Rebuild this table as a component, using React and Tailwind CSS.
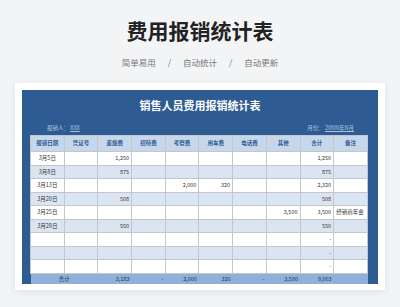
const headers = ["报销日期", "凭证号", "差旅费", "招待费", "考察费", "用车费", "电话费", "其他", "合计", "备注"];

const rows = [
  { date: "3月5日", travel: "1,250", total: "1,250" },
  { date: "3月8日", travel: "875", total: "875" },
  { date: "3月13日", inspect: "2,000", car: "320", total: "2,320" },
  { date: "3月20日", travel: "508", total: "508" },
  { date: "3月25日", other: "3,500", total: "3,500", note: "经销商年会" },
  { date: "3月28日", travel: "550", total: "550" },
  { total: "-" },
  { total: "-" },
  { total: "-" },
];

const font = { fontFamily: '"Noto Sans CJK SC", "Noto Sans", sans-serif' };

function Num({ v }) {
  return (
    <td className="border border-[#c3c6ca] text-right pr-[2px] text-[5.5px] text-[#333]">{v}</td>
  );
}

export default function App() {
  return (
    <div style={font} className="w-[400px] h-[307px] bg-[#f3f4f6] overflow-hidden flex flex-col">
      <h1 className="mt-[18px] h-[24px] leading-[24px] text-center text-[21px] font-bold text-[#222]">
        费用报销统计表
      </h1>
      <div className="mt-[14px] flex justify-center items-center gap-[12px] text-[8.5px] leading-[12px] text-[#777]">
        <span>简单易用</span>
        <span>/</span>
        <span>自动统计</span>
        <span>/</span>
        <span>自动更新</span>
      </div>

      <div className="mt-[15px] ml-[15px] w-[370px] h-[207px] bg-white shadow-[0_2px_8px_rgba(0,0,0,0.08)] px-[7px] pt-[7px]">
        <div className="h-[194px] bg-[#2e5c92] flex flex-col">
          <div className="mt-[8px] h-[14px] leading-[14px] text-center text-[11px] font-bold text-white">
            销售人员费用报销统计表
          </div>
          <div className="mt-[12px] h-[8px] leading-[8px] flex justify-between pl-[25px] pr-[24px] text-[5.5px] text-[#a9c3e3]">
            <span>
              报销人： <span className="underline">XXX</span>
            </span>
            <span>
              月份： <span className="underline">20NN年N月</span>
            </span>
          </div>
          <table className="mt-[3px] ml-[8px] w-[338px] table-fixed border-collapse">
            <thead>
              <tr className="h-[16px] bg-[#c6d7ec]">
                {headers.map((h) => (
                  <th key={h} className="border border-[#c3c6ca] text-[5.5px] font-bold text-[#2f5b8f]">
                    {h}
                  </th>
                ))}
              </tr>
            </thead>
            <tbody>
              {rows.map((r, i) => (
                <tr key={i} className={"h-[13.5px] " + (i % 2 === 1 ? "bg-[#dbe5f1]" : "bg-white")}>
                  <td className="border border-[#c3c6ca] text-center text-[5.5px] text-[#333]">{r.date}</td>
                  <td className="border border-[#c3c6ca]"></td>
                  <Num v={r.travel} />
                  <Num v={r.host} />
                  <Num v={r.inspect} />
                  <Num v={r.car} />
                  <Num v={r.phone} />
                  <Num v={r.other} />
                  <Num v={r.total} />
                  <td className="border border-[#c3c6ca] text-left pl-[2px] text-[5.5px] text-[#333]">{r.note}</td>
                </tr>
              ))}
              <tr className="h-[11px] bg-[#8fb0db] text-[5.5px] text-[#333]">
                <td colSpan={2} className="border-t border-[#c3c6ca] text-center">合计</td>
                <td className="border-t border-[#c3c6ca] text-right pr-[2px]">3,183</td>
                <td className="border-t border-[#c3c6ca] text-right pr-[2px]">-</td>
                <td className="border-t border-[#c3c6ca] text-right pr-[2px]">2,000</td>
                <td className="border-t border-[#c3c6ca] text-right pr-[2px]">320</td>
                <td className="border-t border-[#c3c6ca] text-right pr-[2px]">-</td>
                <td className="border-t border-[#c3c6ca] text-right pr-[2px]">3,500</td>
                <td className="border-t border-[#c3c6ca] text-right pr-[2px]">9,003</td>
                <td className="border-t border-[#c3c6ca]"></td>
              </tr>
            </tbody>
          </table>
        </div>
      </div>
    </div>
  );
}
